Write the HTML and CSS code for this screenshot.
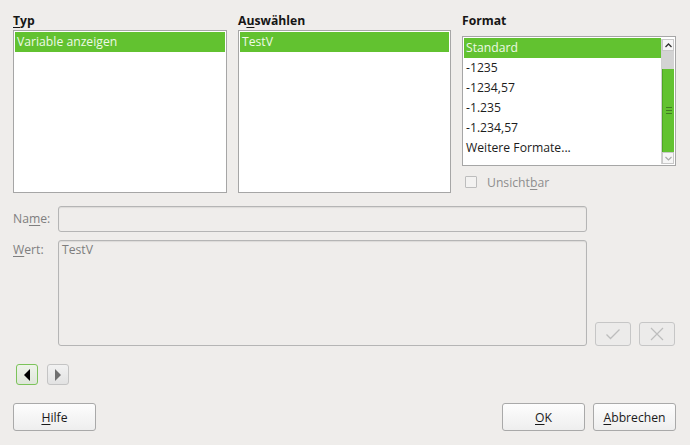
FILE: index.html
```html
<!DOCTYPE html>
<html lang="de">
<head>
<meta charset="utf-8">
<link rel="stylesheet" href="styles.css">
</head>
<body>
<div class="dialog">
  <div class="top">
    <div class="col">
      <div class="label"><u>T</u>yp</div>
      <div class="list tall">
        <div class="row sel">Variable anzeigen</div>
      </div>
    </div>
    <div class="col">
      <div class="label">A<u>u</u>swählen</div>
      <div class="list tall">
        <div class="row sel">TestV</div>
      </div>
    </div>
    <div class="col">
      <div class="label">Format</div>
      <div class="list fmt">
        <div class="rows">
          <div class="row sel">Standard</div>
          <div class="row">-1235</div>
          <div class="row">-1234,57</div>
          <div class="row">-1.235</div>
          <div class="row">-1.234,57</div>
          <div class="row">Weitere Formate...</div>
        </div>
        <div class="sbar">
          <div class="sbtn up"><svg width="7" height="5" viewBox="0 0 7 5"><path d="M0.5 4 L3.5 1 L6.5 4" fill="none" stroke="#333" stroke-width="1.3"/></svg></div>
          <div class="strack"></div>
          <div class="sthumb"><span class="grip"></span></div>
          <div class="sbtn down"><svg width="7" height="5" viewBox="0 0 7 5"><path d="M0.5 1 L3.5 4 L6.5 1" fill="none" stroke="#aaa" stroke-width="1.2"/></svg></div>
        </div>
      </div>
      <div class="check">
        <span class="box"></span>
        <span class="ctext">Unsicht<u>b</u>ar</span>
      </div>
    </div>
  </div>

  <div class="fields">
    <div class="flabel name">Na<u>m</u>e:</div>
    <div class="input short"></div>
    <div></div>
    <div class="flabel"><u>W</u>ert:</div>
    <div class="input long">TestV</div>
    <div class="actions">
      <div class="sq"><svg width="16" height="12" viewBox="0 0 16 12"><path d="M1.5 6.5 L5.5 10.5 L14.5 1.5" fill="none" stroke="#bdbdbd" stroke-width="1.3"/></svg></div>
      <div class="sq"><svg width="14" height="14" viewBox="0 0 14 14"><path d="M1 1 L13 13 M13 1 L1 13" fill="none" stroke="#bdbdbd" stroke-width="1.2"/></svg></div>
    </div>
  </div>

  <div class="nav">
    <div class="nbtn active"><svg width="8" height="12" viewBox="0 0 8 12"><path d="M7 0 L1 6 L7 12 Z" fill="#000"/></svg></div>
    <div class="nbtn"><svg width="8" height="12" viewBox="0 0 8 12"><path d="M1 0 L7 6 L1 12 Z" fill="#6f6f6f"/></svg></div>
  </div>

  <div class="buttons">
    <div class="btn"><u>H</u>ilfe</div>
    <div class="spacer"></div>
    <div class="btn"><u>O</u>K</div>
    <div class="btn"><u>A</u>bbrechen</div>
  </div>
</div>
</body>
</html>
```
FILE: styles.css
```css
* { box-sizing: border-box; }
html, body {
  margin: 0;
  padding: 0;
  background: #efedeb;
  width: 690px;
  height: 445px;
  overflow: hidden;
  font-family: "Open Sans", "Noto Sans", sans-serif;
  font-size: 12.2px;
  color: #1c1c1c;
}
u { text-decoration: underline; text-underline-offset: 2px; }
.dialog {
  padding: 12px 14px 0 13px;
}
.top {
  display: grid;
  grid-template-columns: 214px 213px 214px;
  column-gap: 11px;
}
.label {
  font-weight: bold;
  line-height: 18px;
  height: 18px;
  color: #161616;
}
.list {
  background: #fff;
  border: 1px solid #a6a6a6;
  padding: 1px;
}
.tall { height: 163px; }
.row {
  height: 20px;
  line-height: 19px;
  padding-left: 2px;
  white-space: nowrap;
}
.sel {
  background: #62c230;
  color: #eef9e6;
}
.fmt {
  margin-top: 6px;
  height: 130px;
  display: flex;
}
.rows { flex: 1; }
.sbar {
  width: 13px;
  display: flex;
  flex-direction: column;
  margin-top: 1px;
  border-left: 1px solid #d0d0d0;
}
.sbtn {
  height: 12px;
  background: #f6f6f6;
  display: flex;
  align-items: center;
  justify-content: center;
  border: 1px solid #c8c8c8;
}
.strack { height: 18px; background: #d3d3d3; }
.sthumb {
  flex: 1;
  background: #62c230;
  display: flex;
  align-items: center;
  justify-content: center;
  border-left: 1px solid #4fa525;
}
.grip {
  width: 6px;
  height: 7px;
  border-top: 1px solid #3f7d22;
  border-bottom: 1px solid #3f7d22;
  position: relative;
}
.grip::after {
  content: "";
  position: absolute;
  left: 0; right: 0; top: 2px;
  border-top: 1px solid #3f7d22;
}
.check {
  display: flex;
  align-items: center;
  margin-top: 9px;
  padding-left: 3px;
  height: 14px;
}
.box {
  width: 12px;
  height: 12px;
  border: 1px solid #bdbdbd;
  border-radius: 1px;
  background: #f3f2f1;
}
.ctext {
  margin-left: 10px;
  color: #8e8e8e;
}
.fields {
  margin-top: 13px;
  display: grid;
  grid-template-columns: 45px 529px 88px;
  row-gap: 8px;
}
.flabel {
  color: #7f7f7f;
  line-height: 20px;
  padding-top: 0;
}
.flabel.name { padding-top: 3px; }
.input {
  border: 1px solid #b5b5b5;
  border-radius: 3px;
  background: #efedeb;
  box-shadow: inset 0 1px 1px rgba(0,0,0,0.08);
  color: #7d7d7d;
  padding: 0 3px;
  line-height: 18px;
}
.short { height: 26px; }
.long { height: 106px; }
.actions {
  display: flex;
  align-items: flex-end;
  gap: 8px;
  padding-left: 8px;
}
.sq {
  width: 36px;
  height: 24px;
  border: 1px solid #c6c6c6;
  border-radius: 3px;
  background: #ecebea;
  display: flex;
  align-items: center;
  justify-content: center;
}
.nav {
  display: flex;
  gap: 9px;
  margin-top: 18px;
  padding-left: 3px;
}
.nbtn {
  width: 22px;
  height: 21px;
  border: 1px solid #c4c4c4;
  border-radius: 3px;
  background: linear-gradient(#f2f2f2, #e2e2e2);
  display: flex;
  align-items: center;
  justify-content: center;
}
.nbtn.active {
  border-color: #7cc35a;
  background: linear-gradient(#eef3ea, #dfe6da);
}
.buttons {
  display: flex;
  gap: 8px;
  margin-top: 18px;
}
.spacer { flex: 1; }
.btn {
  width: 83px;
  height: 28px;
  border: 1px solid #a9a9a9;
  border-radius: 3px;
  background: linear-gradient(#fdfdfd, #eeeeee);
  display: flex;
  align-items: center;
  justify-content: center;
  color: #1a1a1a;
}
```
